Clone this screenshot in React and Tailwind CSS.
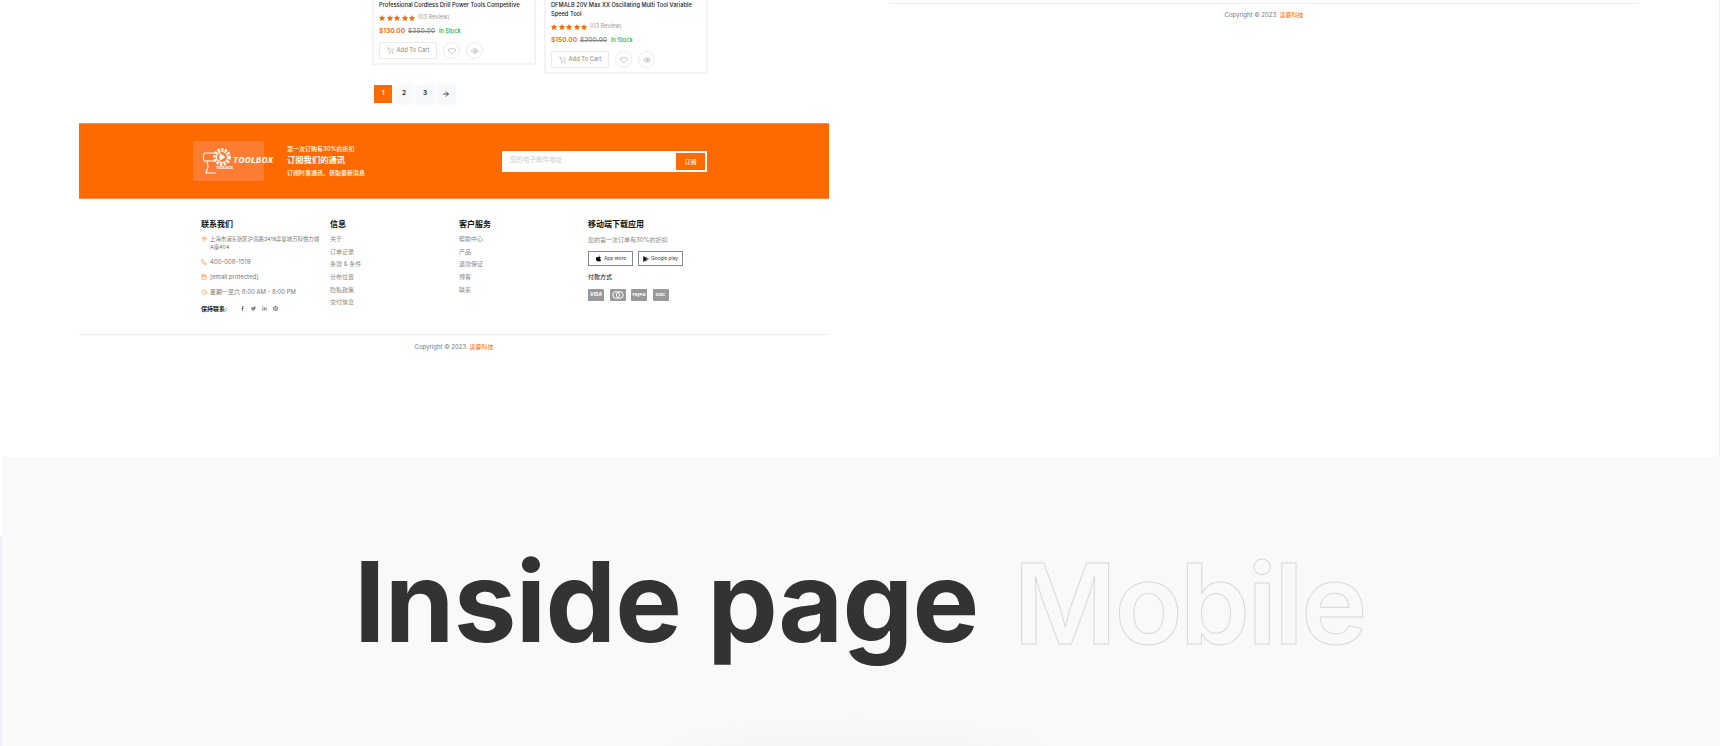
import React from 'react';
import { ShoppingCart, Heart, Eye, MapPin, Phone, CalendarCheck, Clock, ArrowRight } from 'lucide-react';
import { FaFacebookF, FaTwitter, FaLinkedinIn, FaPinterest, FaApple, FaGooglePlay, FaStar } from 'react-icons/fa';

const font = { fontFamily: 'Inter, "Noto Sans CJK SC", sans-serif' };

const Stars = () => (
    <div className="flex gap-[1.5px] text-[#ff6a00]">
        {[0, 1, 2, 3, 4].map((i) => (
            <FaStar key={i} size={6} />
        ))}
    </div>
);

const ProductCard = ({ title, price, oldPrice }) => (
    <div className="w-[164px] border-2 border-t-0 border-[#f3f3f3] px-[5px] pb-[4px]">
        <p className="text-[5.7px] leading-[9px] font-medium whitespace-nowrap text-[#222]">{title}</p>
        <div className="mt-[5px] flex items-center gap-[3px]">
            <Stars />
            <span className="text-[5.6px] leading-[7px] text-[#999]">(03 Review)</span>
        </div>
        <div className="mt-[6px] flex items-center gap-[3px] text-[6.6px] leading-[9px] font-semibold">
            <span className="text-[#ff5a00]">{price}</span>
            <span className="font-medium text-[#888] line-through">{oldPrice}</span>
            <span className="ml-[1px] text-[5.6px] font-medium text-[#22a83a]">In Stock</span>
        </div>
        <div className="mt-[6px] flex items-center gap-[6px]">
            <div className="flex h-[17px] w-[58px] items-center justify-center gap-[3px] border border-[#ececec] text-[5.8px] text-[#888]">
                <ShoppingCart size={7} strokeWidth={1.2} />
                Add To Cart
            </div>
            <div className="flex h-[17px] w-[17px] items-center justify-center rounded-full border border-[#ececec] text-[#777]">
                <Heart size={8} strokeWidth={1.2} />
            </div>
            <div className="flex h-[17px] w-[17px] items-center justify-center rounded-full border border-[#ececec] text-[#777]">
                <Eye size={8} strokeWidth={1.2} />
            </div>
        </div>
    </div>
);

const PageButton = ({ children, active }) => (
    <div
        className={
            active
                ? 'flex h-[18px] w-[18px] items-center justify-center bg-[#ff6a00] text-[6.5px] font-semibold text-white'
                : 'flex h-[18px] w-[18px] items-center justify-center bg-[#f7f8fa] text-[6.5px] font-semibold text-[#222] shadow-[0_1px_3px_rgba(0,0,0,0.06)]'
        }
    >
        {children}
    </div>
);

const ToolboxLogo = () => (
    <div className="flex h-[40px] w-[71px] shrink-0 items-center bg-[#ff7d33] pl-[9px]">
        <svg width="33" height="32" viewBox="0 0 33 32" fill="none" stroke="white" strokeWidth="1.1" className="shrink-0">
            <path d="M14 8H3a1.5 1.5 0 0 0-1.5 1.5v5A1.5 1.5 0 0 0 3 16h11" />
            <path d="M5 16l1 6-2 6h10" />
            <circle cx="20" cy="12" r="7.5" strokeWidth="2.6" strokeDasharray="2.4 1.4" />
            <circle cx="20" cy="12" r="5.5" />
            <path d="M18 9v6l4.5-3z" fill="white" />
        </svg>
        <div className="ml-[-2px] mt-[5px] flex flex-col text-white">
            <span className="text-[7.5px] leading-none font-extrabold tracking-[0.6px] whitespace-nowrap italic">TOOLBOX</span>
            <span className="ml-[-17px] mt-[2px] text-[3.5px] leading-none font-bold whitespace-nowrap">TOOLBOX</span>
        </div>
    </div>
);

const ContactRow = ({ icon: Icon, children }) => (
    <div className="flex gap-[3px] text-[6px] leading-[8px] text-[#777]">
        <Icon size={6} strokeWidth={1.6} className="mt-[1px] shrink-0 text-[#ff6a00]" />
        <span>{children}</span>
    </div>
);

const LinkColumn = ({ title, links, className }) => (
    <div className={className}>
        <h4 className="text-[8px] leading-[10px] font-bold text-[#111]">{title}</h4>
        <ul className="mt-[6px] flex flex-col gap-[4.7px] text-[6px] leading-[8px] text-[#888]">
            {links.map((l) => (
                <li key={l}>{l}</li>
            ))}
        </ul>
    </div>
);

const PayCard = ({ children }) => (
    <div className="flex h-[12px] w-[16px] items-center justify-center overflow-hidden rounded-[1px] bg-[#999] text-[4px] font-bold text-white">
        {children}
    </div>
);

const LeftColumn = () => (
    <div className="ml-[79px] w-[750px] shrink-0">
        <div className="ml-[293px] flex items-start gap-[8px]">
            <ProductCard title="Professional Cordless Drill Power Tools Competitive" price="$130.00" oldPrice="$350.00" />
            <ProductCard
                title={
                    <>
                        DFMALB 20V Max XX Oscillating Multi Tool Variable
                        <br />
                        Speed Tool
                    </>
                }
                price="$150.00"
                oldPrice="$200.00"
            />
        </div>
        <div className="ml-[295px] mt-[11px] flex gap-[3px]">
            <PageButton active>1</PageButton>
            <PageButton>2</PageButton>
            <PageButton>3</PageButton>
            <PageButton>
                <ArrowRight size={8} strokeWidth={2.4} />
            </PageButton>
        </div>

        <div className="mt-[20px] flex h-[76px] items-center border-y border-[#ff8a4a] bg-[#ff6a00] pl-[114px]">
            <ToolboxLogo />
            <div className="ml-[23px] text-white">
                <p className="text-[6px] leading-[8px] font-medium">第一次订购有30%的折扣</p>
                <p className="mt-[1px] text-[8.3px] leading-[12px] font-semibold">订阅我们的通讯</p>
                <p className="mt-[2px] text-[6px] leading-[9px] font-medium">订阅时事通讯、获取最新消息</p>
            </div>
            <div className="ml-[137px] flex h-[21px] w-[205px] items-center bg-white">
                <span className="flex-1 pl-[8px] text-[6.5px] text-[#ccc]">您的电子邮件地址</span>
                <div className="flex h-full w-[33px] items-center justify-center border-2 border-white bg-[#ff6a00] text-[6px] font-medium text-white">
                    订阅
                </div>
            </div>
        </div>

        <div className="ml-[122px] mt-[20px] flex items-start">
            <div className="w-[129px]">
                <h4 className="text-[8px] leading-[10px] font-bold text-[#111]">联系我们</h4>
                <div className="mt-[6px] flex w-[120px] flex-col gap-[7px]">
                    <ContactRow icon={MapPin}>
                        <span className="text-[5.4px] whitespace-nowrap">上海市浦东新区沪南路2419弄复地万科悦力城</span>
                        <br />
                        <span className="text-[5.4px]">A座404</span>
                    </ContactRow>
                    <ContactRow icon={Phone}>400-008-1519</ContactRow>
                    <ContactRow icon={CalendarCheck}>[email protected]</ContactRow>
                    <ContactRow icon={Clock}>星期一至六 8:00 AM - 8:00 PM</ContactRow>
                </div>
                <div className="mt-[8px] flex items-center text-[#777]">
                    <span className="w-[39px] text-[6px] leading-[9px] font-semibold text-[#222]">保持联系:</span>
                    <div className="flex gap-[6px]">
                        <FaFacebookF size={5} />
                        <FaTwitter size={5} />
                        <FaLinkedinIn size={5} />
                        <FaPinterest size={5} />
                    </div>
                </div>
            </div>
            <LinkColumn className="w-[129px]" title="信息" links={['关于', '订单记录', '条款 & 条件', '分布位置', '隐私政策', '交付信息']} />
            <LinkColumn className="w-[129px]" title="客户服务" links={['帮助中心', '产品', '退款保证', '博客', '联系']} />
            <div>
                <h4 className="text-[8px] leading-[10px] font-bold text-[#111]">移动端下载应用</h4>
                <p className="mt-[7px] text-[6px] leading-[8px] text-[#888]">您的第一次订单有30%的折扣</p>
                <div className="mt-[7px] flex gap-[5px]">
                    <div className="flex h-[15px] w-[45px] items-center justify-center gap-[2px] border border-[#888] text-[4.8px] text-[#333]">
                        <FaApple size={7} className="text-black" />
                        App store
                    </div>
                    <div className="flex h-[15px] w-[45px] items-center justify-center gap-[2px] border border-[#888] text-[4.8px] text-[#333]">
                        <FaGooglePlay size={6} className="text-black" />
                        Google play
                    </div>
                </div>
                <p className="mt-[7px] text-[6px] leading-[8px] font-medium text-[#333]">付款方式</p>
                <div className="mt-[8px] flex gap-[5.5px]">
                    <PayCard>
                        <span className="text-[5px] italic">VISA</span>
                    </PayCard>
                    <PayCard>
                        <svg width="12" height="8" viewBox="0 0 12 8" fill="none" stroke="white" strokeWidth="1">
                            <circle cx="4.2" cy="4" r="3.4" />
                            <circle cx="7.8" cy="4" r="3.4" />
                        </svg>
                    </PayCard>
                    <PayCard>PayPal</PayCard>
                    <PayCard>DISC</PayCard>
                </div>
            </div>
        </div>

        <div className="mt-[21px] border-t border-[#eeeeee] pt-[7px] text-center text-[6px] leading-[9px] text-[#777]">
            Copyright © 2023. <span className="text-[#ff6a00]">漾鹿科技</span>
        </div>
    </div>
);

const RightColumn = () => (
    <div className="ml-[60px] w-[750px] shrink-0 pt-[3px]">
        <div className="border-t border-[#eeeeee] pt-[6px] text-center text-[6px] leading-[9px] text-[#777]">
            Copyright © 2023. <span className="text-[#ff6a00]">漾鹿科技</span>
        </div>
    </div>
);

const App = () => {
    return (
        <div className="flex h-[746px] w-[1720px] flex-col overflow-hidden bg-white" style={font}>
            <div className="flex h-[457px] shrink-0 overflow-hidden border-r border-[#eeeeee]">
                <LeftColumn />
                <RightColumn />
            </div>
            <div className="flex flex-1">
                <div className="flex w-[2px] flex-col">
                    <div className="h-[79px] bg-white" />
                    <div className="flex-1 bg-[#eef1f8]" />
                </div>
                <div className="relative flex-1 overflow-hidden bg-[#f9f9f9] pl-[352px] pt-[82px]">
                    <h2 className="flex items-baseline gap-[35px] text-[112px] leading-[125px] font-bold tracking-[-0.7px] whitespace-nowrap text-[#333333]">
                        <span>Inside page</span>
                        <span className="translate-y-[2px] font-semibold tracking-[-2.5px] text-transparent [-webkit-text-stroke:1px_#d8d8d8]">Mobile</span>
                    </h2>
                    <div className="absolute bottom-[-30px] left-[670px] h-[40px] w-[366px] rounded-[50%] bg-[#f5f5f5] blur-[8px]" />
                </div>
            </div>
        </div>
    );
};

export default App;
